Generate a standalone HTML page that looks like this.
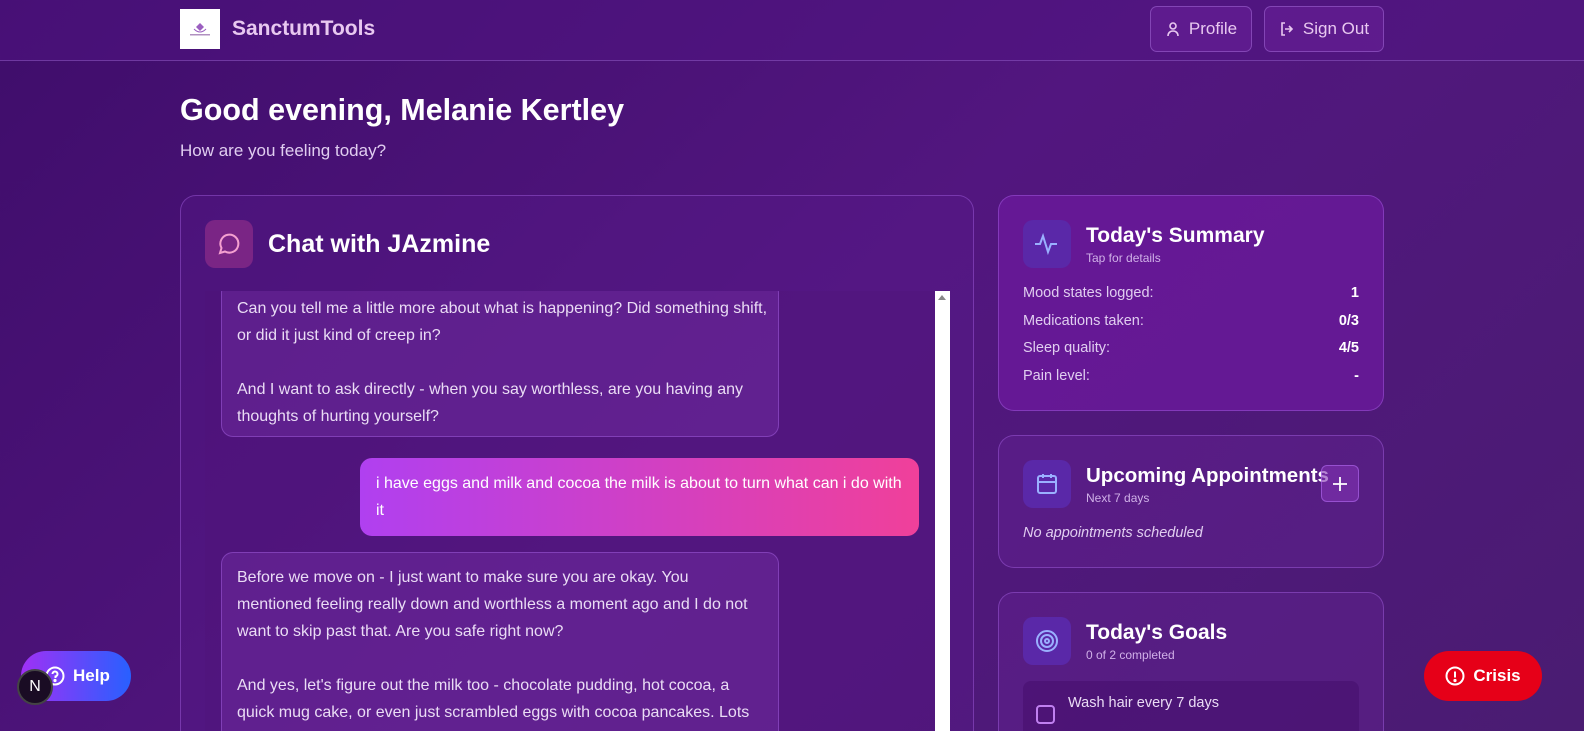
<!DOCTYPE html>
<html style="width:1584px;height:731px;overflow:hidden"><head><meta charset="utf-8"><style>
*{box-sizing:border-box;margin:0;padding:0}
body{width:1584px;height:731px;overflow:hidden;font-family:"Liberation Sans",sans-serif;color:#fff;background:linear-gradient(135deg,#3f0d6b 0%,#52167f 50%,#4a1c72 100%);position:relative}
.hdr{position:absolute;left:0;top:0;width:1584px;height:61px;border-bottom:1px solid rgba(200,150,255,.3);background:rgba(80,20,130,.5)}
.logo{position:absolute;left:180px;top:9px;width:40px;height:40px;background:#fff}
.brand{position:absolute;left:232px;top:17px;font-size:21px;font-weight:bold;color:#e8c8f0}
.btn{position:absolute;top:6px;height:46px;border:1px solid rgba(200,150,255,.35);border-radius:7px;background:rgba(120,40,170,.35);color:#e8c8f0;font-size:17px;display:flex;align-items:center;justify-content:center;gap:8px;white-space:nowrap}
h1{position:absolute;left:180px;top:93px;font-size:30.5px;font-weight:bold;white-space:nowrap}
.sub{position:absolute;left:180px;top:141px;font-size:17px;color:#e0cdf0}
.card{position:absolute;border:1px solid rgba(190,120,255,.35);border-radius:16px;background:rgba(110,40,160,.3);overflow:hidden}
.ic{position:absolute;width:48px;height:48px;border-radius:10px;display:flex;align-items:center;justify-content:center}
.ttl{position:absolute;font-size:21px;font-weight:bold;white-space:nowrap}
.small{position:absolute;font-size:12px;color:#d0b0e8}
.msg{position:absolute;font-size:16px;line-height:27px;color:#eadcf5}
.row{position:absolute;left:24px;right:24px;display:flex;justify-content:space-between;font-size:14.5px;color:#e0cdf0}
.row b{color:#fff}
</style></head><body>
<div class="hdr"></div>
<div class="logo"><svg width="40" height="40"><path d="M16 18 l4 -4 l4 4 l-4 4z" fill="#9b5fc0"/><path d="M14 20 q6 6 12 0" stroke="#9b5fc0" fill="none"/><rect x="10" y="25" width="20" height="1.5" fill="#b090c0"/></svg></div>
<div class="brand">SanctumTools</div>
<div class="btn" style="left:1150px;width:102px"><svg width="16" height="16" fill="none" stroke="#e8c8f0" stroke-width="1.6"><circle cx="8" cy="5" r="3"/><path d="M3 15c0-3 2-5 5-5s5 2 5 5"/></svg>Profile</div>
<div class="btn" style="left:1264px;width:120px"><svg width="16" height="16" fill="none" stroke="#e8c8f0" stroke-width="1.6"><path d="M6 2H3v12h3M10 5l3 3-3 3M13 8H6"/></svg>Sign Out</div>
<h1>Good evening, Melanie Kertley</h1>
<div class="sub">How are you feeling today?</div>

<div class="card" style="left:180px;top:195px;width:794px;height:560px;background:rgba(90,25,140,.35)">
<div class="ic" style="left:24px;top:24px;background:#7a2585"><svg width="26" height="26" fill="none" stroke="#f5a0d0" stroke-width="2"><path d="M4 22l1.5-5A9 9 0 1 1 9 20.5z"/></svg></div>
<div class="ttl" style="left:87px;top:34px;font-size:25px">Chat with JAzmine</div>
<div style="position:absolute;left:24px;top:95px;width:730px;height:470px;overflow:hidden;background:rgba(80,20,120,.3)">
<div style="position:absolute;left:16px;top:-10px;width:558px;height:156px;border:1px solid rgba(190,120,255,.35);border-radius:12px;background:rgba(120,50,170,.4)"></div>
<div class="msg" style="left:32px;top:4px;width:538px">Can you tell me a little more about what is happening? Did something shift, or did it just kind of creep in?<br><br>And I want to ask directly - when you say worthless, are you having any thoughts of hurting yourself?</div>
<div style="position:absolute;left:155px;top:167px;width:559px;height:78px;border-radius:12px;background:linear-gradient(90deg,#b040f0,#f0409a)"></div>
<div class="msg" style="left:171px;top:179px;width:527px;color:#fff">i have eggs and milk and cocoa the milk is about to turn what can i do with it</div>
<div style="position:absolute;left:16px;top:261px;width:558px;height:260px;border:1px solid rgba(190,120,255,.35);border-radius:12px;background:rgba(120,50,170,.4)"></div>
<div class="msg" style="left:32px;top:273px;width:530px">Before we move on - I just want to make sure you are okay. You mentioned feeling really down and worthless a moment ago and I do not want to skip past that. Are you safe right now?<br><br>And yes, let's figure out the milk too - chocolate pudding, hot cocoa, a quick mug cake, or even just scrambled eggs with cocoa pancakes. Lots of</div>
</div>
<div style="position:absolute;left:754px;top:95px;width:15px;height:470px;background:#fff"><div style="margin:4px 3px;width:0;height:0;border:4px solid transparent;border-bottom:5px solid #888;border-top:0"></div></div>
</div>

<div class="card" style="left:998px;top:195px;width:386px;height:216px;background:rgba(110,25,160,.7)">
<div class="ic" style="left:24px;top:24px;background:#5a28a8"><svg width="26" height="26" fill="none" stroke="#9ab0ff" stroke-width="2"><path d="M1 13h5l3-8 5 16 3-8h6"/></svg></div>
<div class="ttl" style="left:87px;top:28px">Today's Summary</div>
<div class="small" style="left:87px;top:55px">Tap for details</div>
<div class="row" style="top:89px"><span>Mood states logged:</span><b>1</b></div>
<div class="row" style="top:117px"><span>Medications taken:</span><b>0/3</b></div>
<div class="row" style="top:144px"><span>Sleep quality:</span><b>4/5</b></div>
<div class="row" style="top:172px"><span>Pain level:</span><b>-</b></div>
</div>

<div class="card" style="left:998px;top:435px;width:386px;height:133px">
<div class="ic" style="left:24px;top:24px;background:#5a28a8"><svg width="24" height="24" fill="none" stroke="#9ab0ff" stroke-width="2"><rect x="3" y="4" width="18" height="17" rx="2"/><path d="M3 10h18M8 2v4M16 2v4"/></svg></div>
<div class="ttl" style="left:87px;top:28px;font-size:20.5px">Upcoming Appointments</div>
<div class="small" style="left:87px;top:55px">Next 7 days</div>
<div style="position:absolute;left:322px;top:29px;width:38px;height:37px;border:1px solid rgba(190,120,255,.5);border-radius:6px;background:rgba(130,50,180,.6);display:flex;align-items:center;justify-content:center"><svg width="16" height="16" stroke="#fff" stroke-width="1.8"><path d="M8 1v14M1 8h14"/></svg></div>
<div style="position:absolute;left:24px;top:89px;font-size:14.5px;font-style:italic;color:#e0cdf0">No appointments scheduled</div>
</div>

<div class="card" style="left:998px;top:592px;width:386px;height:160px">
<div class="ic" style="left:24px;top:24px;background:#5a28a8"><svg width="26" height="26" fill="none" stroke="#9ab0ff" stroke-width="2"><circle cx="13" cy="13" r="10"/><circle cx="13" cy="13" r="6"/><circle cx="13" cy="13" r="2"/></svg></div>
<div class="ttl" style="left:87px;top:28px">Today's Goals</div>
<div class="small" style="left:87px;top:55px">0 of 2 completed</div>
<div style="position:absolute;left:24px;top:88px;width:336px;height:80px;border-radius:8px;background:rgba(70,15,110,.6)"></div>
<div style="position:absolute;left:37px;top:112px;width:19px;height:19px;border:2px solid #c080f0;border-radius:4px"></div>
<div style="position:absolute;left:69px;top:102px;font-size:14.5px;color:#eadcf5">Wash hair every 7 days</div>
</div>

<div style="position:absolute;left:21px;top:651px;width:110px;height:50px;border-radius:25px;background:linear-gradient(90deg,#a030f5,#2860ff);display:flex;align-items:center;padding-left:24px;gap:8px;font-weight:bold;font-size:17px"><svg width="20" height="20" fill="none" stroke="#fff" stroke-width="2"><circle cx="10" cy="10" r="8.5"/><path d="M7.5 8a2.5 2.5 0 1 1 3 2.4V12"/><circle cx="10" cy="14.5" r=".6" fill="#fff"/></svg>Help</div>
<div style="position:absolute;left:17px;top:669px;width:36px;height:36px;border-radius:50%;background:#1a0c24;border:2px solid #444;color:#fff;font-size:16px;text-align:center;line-height:32px">N</div>
<div style="position:absolute;left:1424px;top:651px;width:118px;height:50px;border-radius:25px;background:#e60018;display:flex;align-items:center;justify-content:center;gap:8px;font-weight:bold;font-size:17px"><svg width="20" height="20" fill="none" stroke="#fff" stroke-width="2"><circle cx="10" cy="10" r="8.5"/><path d="M10 5.5v6"/><circle cx="10" cy="14.5" r=".6" fill="#fff"/></svg>Crisis</div>
</body></html>
